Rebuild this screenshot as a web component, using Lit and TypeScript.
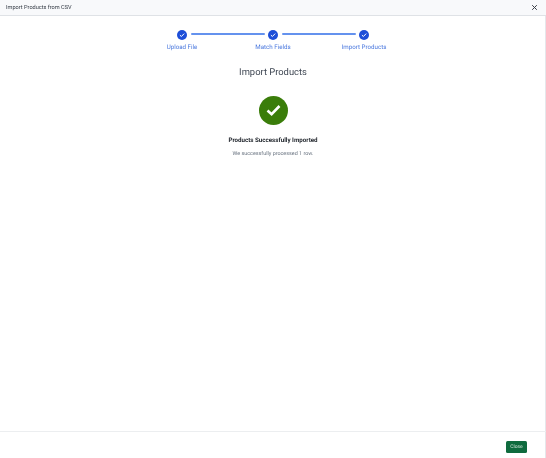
import { LitElement, html, css, svg } from "lit";
import { customElement } from "lit/decorators.js";

const check = svg`<svg class="tick" viewBox="0 0 10 10"><path d="M2.9 5.1 L4.4 6.5 L7.2 3.6" fill="none" stroke="#fff" stroke-width="1"/></svg>`;

@customElement("app-root")
export class AppRoot extends LitElement {
  static styles = css`
    :host { display: block; width: 546px; height: 458px; font-family: Roboto, "Liberation Sans", sans-serif; background: #fff; text-rendering: geometricPrecision; }
    .dialog { width: 546px; height: 458px; box-sizing: border-box; box-shadow: inset -1px 0 0 #e5e7eb; display: flex; flex-direction: column; will-change: transform; }
    header { height: 16px; box-sizing: border-box; background: #f8f9fb; border-bottom: 1px solid #dfe2e6; display: flex; align-items: center; justify-content: space-between; padding: 0 8px 0 6px; font-size: 5.6px; color: #333a44; }
    .close { width: 7px; height: 7px; display: block; }
    main { flex: 1; display: flex; flex-direction: column; align-items: center; padding-top: 14px; }
    .steps { display: flex; align-items: flex-start; }
    .step { width: 72px; display: flex; flex-direction: column; align-items: center; gap: 3px; color: #4a78de; font-size: 6.2px; line-height: 9px; white-space: nowrap; }
    .dot { width: 10px; height: 10px; border-radius: 50%; background: #1d4ed8; display: block; }
    .tick { width: 10px; height: 10px; display: block; }
    .line { width: 74px; height: 2px; margin: 3px -27.5px 0; background: #6492ee; border-radius: 1px; }
    h1 { margin: 13px 0 0; font-size: 9.4px; line-height: 16px; font-weight: 400; color: #3f4753; }
    .ok { width: 29px; height: 29px; margin-top: 15px; display: block; }
    h2 { margin: 11px 0 0; font-size: 6.2px; line-height: 9px; font-weight: 700; color: #1c2128; }
    p { margin: 5px 0 0; font-size: 5.4px; line-height: 8px; color: #6b7582; }
    footer { height: 27px; box-sizing: border-box; border-top: 1px solid #eceef0; display: flex; align-items: center; justify-content: flex-end; padding: 3px 19px 0 0; }
    button { width: 21px; height: 12px; padding: 0; border: none; border-radius: 1.5px; background: #0f6b3e; color: #cfe3d7; font: inherit; font-size: 5px; text-rendering: inherit; }
  `;
  render() {
    const step = (t: string) => html`<div class="step"><span class="dot">${check}</span>${t}</div>`;
    return html`<div class="dialog">
      <header><span>Import Products from CSV</span>
        <svg class="close" viewBox="0 0 7 7"><path d="M1.2 1.2 L5.8 5.8 M5.8 1.2 L1.2 5.8" stroke="#3a3f47" stroke-width="1"/></svg>
      </header>
      <main>
        <div class="steps">${step("Upload File")}<div class="line"></div>${step("Match Fields")}<div class="line"></div>${step("Import Products")}</div>
        <h1>Import Products</h1>
        <svg class="ok" viewBox="0 0 29 29"><circle cx="14.5" cy="14.5" r="14.5" fill="#3a7d0a"/><path d="M8.5 14.5 L12.6 18.2 L20.5 10" fill="none" stroke="#fff" stroke-width="2.6"/></svg>
        <h2>Products Successfully Imported</h2>
        <p>We successfully processed 1 row.</p>
      </main>
      <footer><button>Close</button></footer>
    </div>`;
  }
}
